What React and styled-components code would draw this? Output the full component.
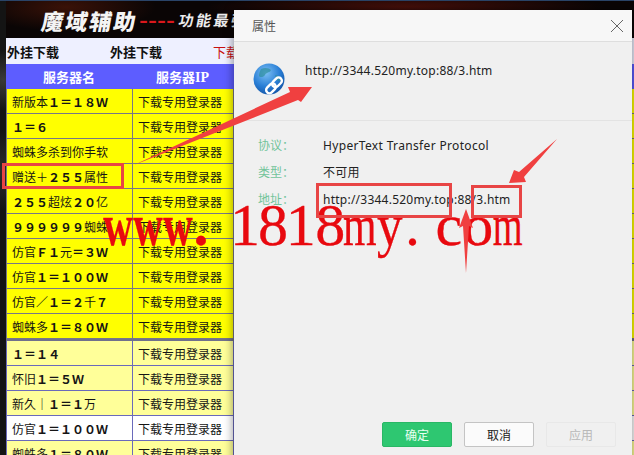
import React from "react";
import styled, { createGlobalStyle } from "styled-components";

const Global = createGlobalStyle`
  html, body { margin: 0; padding: 0; background: #0b0b0b; }
`;

const CJK = `"Noto Sans CJK SC", "Noto Sans", sans-serif`;
const UI = `"Noto Sans", "Noto Sans CJK SC", sans-serif`;

const Stage = styled.div`
  position: relative;
  width: 634px;
  height: 455px;
  overflow: hidden;
  background:
    radial-gradient(circle at 3px 80px, #3a3a3a 0, transparent 30px),
    radial-gradient(circle at 2px 170px, #2c2c2c 0, transparent 40px),
    linear-gradient(#2a4468 0, #2a4468 1px, #141414 1px);
  padding: 1px 0 0 6px;
  box-sizing: border-box;
`;

const Page = styled.div`
  width: 640px;
  display: flex;
  flex-direction: column;
`;

const Banner = styled.div`
  height: 37px;
  flex: none;
  display: flex;
  align-items: center;
  padding-left: 36px;
  background:
    radial-gradient(ellipse 90px 24px at 60px 6px, #3a1208 0, transparent 100%),
    radial-gradient(ellipse 200px 14px at 400px 6px, #4a100a 0, transparent 100%),
    #0a0505;
  font-family: ${CJK};
  white-space: nowrap;
`;

const BannerTitle = styled.span`
  color: #f4f4f4;
  font-size: 22px;
  font-weight: 900;
  letter-spacing: 2px;
  transform: skewX(-10deg);
`;

const BannerDash = styled.span`
  margin: 0 4px 0 1px;
  color: #d9181c;
  font-family: "Liberation Sans", sans-serif;
  font-size: 27px;
  line-height: 20px;
  font-weight: 400;
`;

const BannerTag = styled.span`
  color: #ececec;
  font-size: 15px;
  font-weight: 700;
  letter-spacing: 2.5px;
  transform: skewX(-10deg);
`;

const LinkBar = styled.div`
  height: 26px;
  flex: none;
  display: flex;
  align-items: center;
  padding-left: 1px;
  background: #eef0ff;
  font-family: ${CJK};
  font-size: 13px;
  white-space: nowrap;
`;

const LinkItem = styled.span`
  width: 103px;
  color: ${(p) => (p.$red ? "#c81010" : "#111")};
  font-weight: ${(p) => (p.$red ? 400 : 700)};
`;

const Head = styled.div`
  height: 25px;
  flex: none;
  display: grid;
  grid-template-columns: 126px 101px 1fr;
  align-items: center;
  background: #5d5dff;
  color: #fff;
  font-family: ${CJK};
  font-size: 13px;
  font-weight: 700;
  text-align: center;
`;

const HeadLatin = styled.span`
  font-family: "Liberation Serif", serif;
  font-size: 14px;
`;

const Row = styled.div`
  height: 25px;
  flex: none;
  box-sizing: border-box;
  display: grid;
  grid-template-columns: 125px 101px 1fr;
  background: ${(p) => p.$bg};
  border-bottom: 1px solid ${(p) => p.$line};
  border-left: 1px solid ${(p) => p.$line};
  --line: ${(p) => p.$line};
  font-family: ${CJK};
  font-size: 12px;
  color: #151515;
  white-space: nowrap;
`;

const Cell = styled.div`
  display: flex;
  align-items: center;
  padding: 1px 0 0 5px;
  overflow: hidden;
  & + & {
    border-left: 1px solid var(--line);
  }
`;

const Num = styled.b`
  font-weight: 700;
`;

const Divider = styled.div`
  height: 2px;
  flex: none;
  background: #70708c;
`;

const Dialog = styled.div`
  position: absolute;
  left: 234px;
  top: 10px;
  width: 398px;
  height: 460px;
  background: #f0f0f0;
  border-radius: 3px 3px 0 0;
  box-shadow: 0 0 9px 2px rgba(0, 0, 0, 0.35);
  font-family: ${UI};
  color: #222;
  display: flex;
  flex-direction: column;
`;

const TitleBar = styled.div`
  height: 31px;
  flex: none;
  display: flex;
  align-items: center;
  justify-content: space-between;
  padding: 0 8px 0 18px;
  background: #f7f7f7;
  border-bottom: 1px solid #dedede;
  font-size: 12px;
  color: #555;
`;

const UrlHead = styled.div`
  height: 79px;
  flex: none;
  box-sizing: border-box;
  display: flex;
  gap: 20px;
  padding: 21px 0 0 19px;
  border-bottom: 1px solid #e3e3e3;
`;

const UrlText = styled.div`
  font-size: 12px;
  letter-spacing: 0.02em;
  line-height: 16px;
  color: #222;
`;

const Props = styled.div`
  display: grid;
  grid-template-columns: 65px 1fr;
  row-gap: 11px;
  padding: 17px 0 0 24px;
  grid-auto-rows: 16px;
  font-size: 12px;
  line-height: 16px;
`;

const PropLabel = styled.div`
  color: #72c49a;
  font-size: 12px;
`;

const PropValue = styled.div`
  color: #222;
  letter-spacing: ${(p) => p.$track || "0.02em"};
`;

const Footer = styled.div`
  position: absolute;
  top: 412px;
  right: 16px;
  display: flex;
  gap: 12px;
`;

const Button = styled.div`
  width: 70px;
  height: 25px;
  box-sizing: border-box;
  display: flex;
  align-items: center;
  justify-content: center;
  border-radius: 2px;
  font-size: 12px;
  font-family: ${CJK};
  border: 1px solid ${(p) => (p.$kind === "ok" ? "#29b765" : p.$kind === "off" ? "#e8e8e8" : "#c4c4c4")};
  background: ${(p) => (p.$kind === "ok" ? "#2ec771" : p.$kind === "off" ? "#f0f0f0" : "#fbfbfb")};
  color: ${(p) => (p.$kind === "ok" ? "#e9fff2" : p.$kind === "off" ? "#b9b9b9" : "#222")};
`;

const Overlay = styled.svg`
  position: absolute;
  inset: 0;
  width: 634px;
  height: 455px;
  pointer-events: none;
`;

const Watermark = styled.div`
  position: absolute;
  left: 103px;
  top: 190px;
  display: flex;
  font-family: "Liberation Serif", serif;
  font-size: 60px;
  line-height: 70px;
  color: #e8090f;
  -webkit-text-stroke: 0.3px #e8090f;
  white-space: nowrap;
`;

const Glyph = styled.span`
  width: ${(p) => p.$w}px;
  margin-left: ${(p) => p.$ml || 0}px;
  display: flex;
  justify-content: center;
  font-weight: ${(p) => (p.$bold ? 700 : 400)};
  transform: scaleX(${(p) => p.$sx || 1});
`;

const rowsA = ["新版本１＝１８Ｗ","１＝６","蜘蛛多杀到你手软","赠送＋２５５属性","２５５超炫２０亿","９９９９９９蜘蛛","仿官Ｆ１元＝３Ｗ","仿官１＝１００Ｗ","仿官／１＝２千７","蜘蛛多１＝８０Ｗ"];
const rowsB = [
  ["１＝１４","#ffff99"],["怀旧１＝５Ｗ","#ffff99"],["新久｜１＝１万","#ffff99"],["仿官１＝１００Ｗ","#ffffff"],["蜘蛛多１＝８０Ｗ","#ffff99"],
];

const wm = [
  { c: "w", w: 30, bold: true, sx: 0.68 },
  { c: "w", w: 30, bold: true, sx: 0.68 },
  { c: "w", w: 30, bold: true, sx: 0.68 },
  { c: ".", w: 16, bold: true },
  { c: "1", w: 30, ml: 21 },
  { c: "8", w: 26 },
  { c: "1", w: 29.5 },
  { c: "8", w: 29.5 },
  { c: "m", w: 29.5, sx: 0.72 },
  { c: "y", w: 29.5, sx: 0.85 },
  { c: ".", w: 17 },
  { c: "c", w: 29.5, ml: 13 },
  { c: "o", w: 29.5 },
  { c: "m", w: 29.5, sx: 0.64 },
];

const boldify = (text) =>
  text.split(/([０-９Ａ-Ｚ＝｜])/).map((part, i) => (i % 2 ? <Num key={i}>{part}</Num> : part));

const Globe = () => (
  <svg width="32" height="32" viewBox="0 0 32 32">
    <defs>
      <radialGradient id="g" cx="0.4" cy="0.3" r="0.8">
        <stop offset="0" stopColor="#7cc0f4" />
        <stop offset="0.55" stopColor="#2a7fd6" />
        <stop offset="1" stopColor="#0e4c9e" />
      </radialGradient>
    </defs>
    <circle cx="16" cy="16" r="15.5" fill="url(#g)" />
    <path d="M8 6c4-2 8-1 10 1-1 3-5 2-6 5-1 2-5 3-6 1 0-3 1-5 2-7zM22 12c3 0 6 2 7 5-2 2-5 1-6-1z" fill="#2f8f9e" opacity=".7" />
    <g fill="none" stroke="#fff" strokeWidth="2.4" strokeLinecap="round" transform="rotate(-45 21 22)">
      <rect x="11" y="19" width="11" height="6.5" rx="3.2" />
      <rect x="19.5" y="19" width="11" height="6.5" rx="3.2" />
    </g>
  </svg>
);

export default function App() {
  return (
    <>
      <Global />
      <Stage>
        <Page>
          <Banner>
            <BannerTitle>魔域辅助</BannerTitle>
            <BannerDash>----</BannerDash>
            <BannerTag>功能最强</BannerTag>
          </Banner>
          <LinkBar>
            <LinkItem>外挂下载</LinkItem>
            <LinkItem>外挂下载</LinkItem>
            <LinkItem $red>下载</LinkItem>
          </LinkBar>
          <Head>
            <div>服务器名</div>
            <div>服务器<HeadLatin>IP</HeadLatin></div>
            <div />
          </Head>
          {rowsA.map((n, i) => (
            <Row key={i} $bg="#ffff00" $line="#777788">
              <Cell>{boldify(n)}</Cell>
              <Cell>下载专用登录器</Cell>
              <Cell />
            </Row>
          ))}
          <Divider />
          {rowsB.map(([n, bg], i) => (
            <Row key={i} $bg={bg} $line="#6a6abb">
              <Cell>{boldify(n)}</Cell>
              <Cell>下载专用登录器</Cell>
              <Cell />
            </Row>
          ))}
        </Page>
        <Dialog>
          <TitleBar>
            属性
            <svg width="14" height="14" viewBox="0 0 14 14">
              <path d="M1 1l12 12M13 1L1 13" stroke="#666" strokeWidth="1" fill="none" />
            </svg>
          </TitleBar>
          <UrlHead>
            <Globe />
            <UrlText>http://3344.520my.top:88/3.htm</UrlText>
          </UrlHead>
          <Props>
            <PropLabel>协议：</PropLabel>
            <PropValue $track="0.34px">HyperText Transfer Protocol</PropValue>
            <PropLabel>类型：</PropLabel>
            <PropValue>不可用</PropValue>
            <PropLabel>地址：</PropLabel>
            <PropValue>http://3344.520my.top:88/3.htm</PropValue>
          </Props>
          <Footer>
            <Button $kind="ok">确定</Button>
            <Button>取消</Button>
            <Button $kind="off">应用</Button>
          </Footer>
        </Dialog>
        <Watermark>
          {wm.map((g, i) => (
            <Glyph key={i} $w={g.w} $ml={g.ml} $bold={g.bold} $sx={g.sx}>{g.c}</Glyph>
          ))}
        </Watermark>
        <Overlay viewBox="0 0 634 455">
          <g fill="none" stroke="#e84545" strokeWidth="3">
            <rect x="3.5" y="164.5" width="119" height="23" />
            <rect x="317.5" y="184.5" width="133" height="32" />
            <rect x="472.5" y="186.5" width="48" height="30" />
          </g>
          <g fill="#f04040">
            <path d="M134 165L290 92 L288 87 L312 87 L301 102 L298 100z" />
            <path d="M557 139L519 172 L514 170 L509 183 L526 182 L524 177z" />
            <path d="M466 209L473 228 L469 226 L466 273 L463 226 L459 228z" />
          </g>
        </Overlay>
      </Stage>
    </>
  );
}
